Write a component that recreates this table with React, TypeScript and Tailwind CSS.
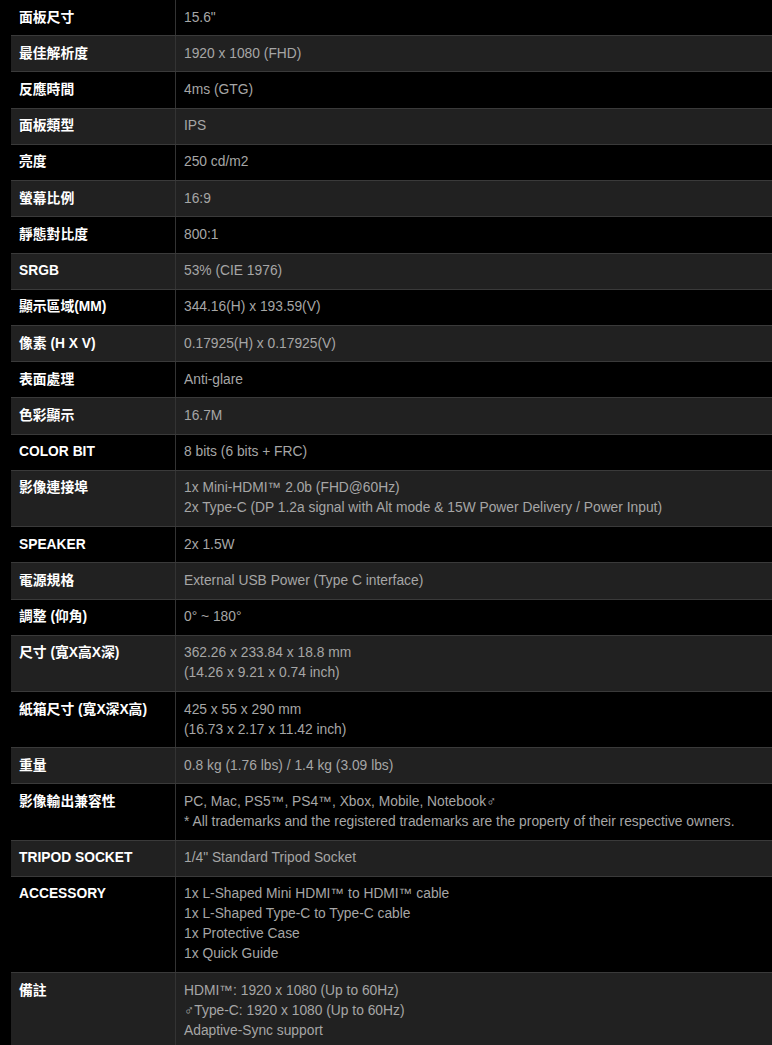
const rows: [string, string[]][] = [
  ['面板尺寸', ['15.6"']],
  ['最佳解析度', ['1920 x 1080 (FHD)']],
  ['反應時間', ['4ms (GTG)']],
  ['面板類型', ['IPS']],
  ['亮度', ['250 cd/m2']],
  ['螢幕比例', ['16:9']],
  ['靜態對比度', ['800:1']],
  ['SRGB', ['53% (CIE 1976)']],
  ['顯示區域(MM)', ['344.16(H) x 193.59(V)']],
  ['像素 (H X V)', ['0.17925(H) x 0.17925(V)']],
  ['表面處理', ['Anti-glare']],
  ['色彩顯示', ['16.7M']],
  ['COLOR BIT', ['8 bits (6 bits + FRC)']],
  [
    '影像連接埠',
    [
      '1x Mini-HDMI™ 2.0b (FHD@60Hz)',
      '2x Type-C (DP 1.2a signal with Alt mode & 15W Power Delivery / Power Input)',
    ],
  ],
  ['SPEAKER', ['2x 1.5W']],
  ['電源規格', ['External USB Power (Type C interface)']],
  ['調整 (仰角)', ['0° ~ 180°']],
  ['尺寸 (寬X高X深)', ['362.26 x 233.84 x 18.8 mm', '(14.26 x 9.21 x 0.74 inch)']],
  ['紙箱尺寸 (寬X深X高)', ['425 x 55 x 290 mm', '(16.73 x 2.17 x 11.42 inch)']],
  ['重量', ['0.8 kg (1.76 lbs) / 1.4 kg (3.09 lbs)']],
  [
    '影像輸出兼容性',
    [
      'PC, Mac, PS5™, PS4™, Xbox, Mobile, Notebook♂',
      '* All trademarks and the registered trademarks are the property of their respective owners.',
    ],
  ],
  ['TRIPOD SOCKET', ['1/4" Standard Tripod Socket']],
  [
    'ACCESSORY',
    [
      '1x L-Shaped Mini HDMI™ to HDMI™ cable',
      '1x L-Shaped Type-C to Type-C cable',
      '1x Protective Case',
      '1x Quick Guide',
    ],
  ],
  ['備註', ['HDMI™: 1920 x 1080 (Up to 60Hz)', '♂Type-C: 1920 x 1080 (Up to 60Hz)', 'Adaptive-Sync support']],
]

export default function App() {
  return (
    <div className="min-h-[1045px] bg-black pl-[11px] overflow-hidden font-['Liberation_Sans','Noto_Sans_CJK_TC',sans-serif]">
      <div className="-mt-[1px]">
        {rows.map(([label, values], i) => (
          <div
            key={label}
            className={`flex border-t border-[#3a3a3a] ${i % 2 === 1 ? 'bg-[#212121]' : 'bg-black'}`}
          >
            <div className="w-[164px] shrink-0 pl-[8px] py-[7.62px] text-[13.8px] leading-[20px] font-bold text-white">
              {label}
            </div>
            <div className="flex-1 border-l border-[#333] pl-[8px] py-[7.62px] text-[13.8px] leading-[20px] text-[#a6a6a6] whitespace-nowrap">
              {values.map((v) => (
                <div key={v}>{v}</div>
              ))}
            </div>
          </div>
        ))}
      </div>
    </div>
  )
}
